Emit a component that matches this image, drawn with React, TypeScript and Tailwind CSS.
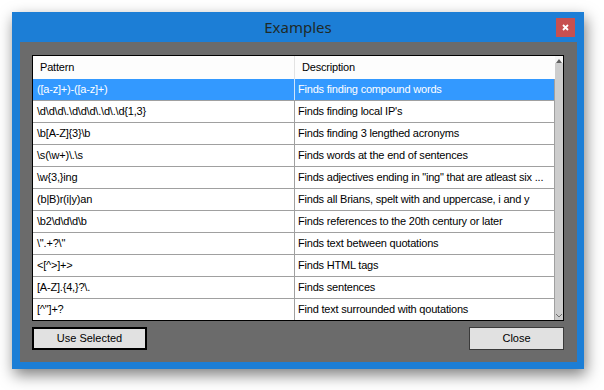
import React from "react";

const rows: [string, string][] = [
  ["([a-z]+)-([a-z]+)", "Finds finding compound words"],
  ["\\d\\d\\d\\.\\d\\d\\d\\.\\d\\.\\d{1,3}", "Finds finding local IP's"],
  ["\\b[A-Z]{3}\\b", "Finds finding 3 lengthed acronyms"],
  ["\\s(\\w+)\\.\\s", "Finds words at the end of sentences"],
  ["\\w{3,}ing", "Finds adjectives ending in \"ing\" that are atleast six ..."],
  ["(b|B)r(i|y)an", "Finds all Brians, spelt with and uppercase, i and y"],
  ["\\b2\\d\\d\\d\\b", "Finds references to the 20th century or later"],
  ["\\\".+?\\\"", "Finds text between quotations"],
  ["<[^>]+>", "Finds HTML tags"],
  ["[A-Z].{4,}?\\.", "Finds sentences"],
  ["[^\"]+?", "Find text surrounded with qoutations"],
];

export default function App() {
  return (
    <div
      className="w-[604px] h-[390px] bg-white pt-[12px] pl-[12px] overflow-hidden"
      style={{ fontFamily: '"Liberation Sans", Arial, sans-serif' }}
    >
      <div className="w-[572px] h-[357px] bg-[#1c7ed6] flex flex-col shadow-[2px_6px_14px_rgba(0,0,0,0.5)]">
        {/* title bar */}
        <div className="relative h-[30px] flex items-center justify-center">
          <span
            className="text-[15px] text-[#1f2a28] leading-none"
            style={{ fontFamily: '"Noto Sans", "Open Sans", sans-serif' }}
          >
            Examples
          </span>
          <div className="absolute right-[9px] top-[6px] w-[19px] h-[19px] bg-[#c75050] flex items-center justify-center">
            <svg width="7" height="7" viewBox="0 0 7 7">
              <path d="M1 1 L6 6 M6 1 L1 6" stroke="white" strokeWidth="1.8" />
            </svg>
          </div>
        </div>
        {/* content */}
        <div className="ml-[8px] mr-[7px] h-[320px] bg-[#6b6b6b] pl-[12px] pr-[13px] pt-[13px] flex flex-col">
          <div className="w-[532px] h-[266px] border border-black bg-white flex text-[11px] tracking-[-0.2px] text-black">
            {/* columns area */}
            <div className="flex flex-col w-[522px]">
              <div className="flex h-[23px] bg-[#fdfdfd] items-center">
                <div className="w-[262px] h-full border-r border-[#e3e3e3] pl-[7px] flex items-center">
                  Pattern
                </div>
                <div className="w-[260px] h-full pl-[7px] flex items-center">Description</div>
              </div>
              {rows.map(([p, d], i) => {
                const sel = i === 0;
                const last = i === rows.length - 1;
                return (
                  <div
                    key={i}
                    className={
                      "flex " +
                      (last ? "h-[21px] " : "h-[22px] border-b border-[#a0a0a0] ") +
                      (sel ? "bg-[#3399ff] text-white" : "bg-white")
                    }
                  >
                    <div
                      className={
                        "w-[262px] border-r pl-[4px] flex items-center whitespace-nowrap overflow-hidden " +
                        (sel ? "border-[#cfe5fb]" : "border-[#a0a0a0]")
                      }
                    >
                      {p}
                    </div>
                    <div className="w-[260px] border-r border-[#a0a0a0] pl-[3px] flex items-center whitespace-nowrap overflow-hidden">
                      {d}
                    </div>
                  </div>
                );
              })}
            </div>
            {/* scrollbar */}
            <div className="w-[8px] flex flex-col bg-[#cdcdcd]">
              <div className="h-[7px] bg-[#f5f5f5] flex items-end justify-center">
                <svg width="6" height="4" viewBox="0 0 6 4">
                  <path d="M0 4 L3 0 L6 4 Z" fill="#606060" />
                </svg>
              </div>
              <div className="flex-1" />
              <div className="h-[6px] flex items-start justify-center">
                <svg width="6" height="4" viewBox="0 0 6 4">
                  <path d="M0 0 L3 3 L6 0" stroke="#707070" strokeWidth="1" fill="none" />
                </svg>
              </div>
            </div>
          </div>
          <div className="flex justify-between mt-[6px]">
            <button className="w-[115px] h-[23px] border-2 border-black bg-[#e1e1e1] text-[11px] text-black flex items-center justify-center">
              Use Selected
            </button>
            <button className="w-[95px] h-[23px] border border-[#3a3a3a] bg-[#e1e1e1] text-[11px] text-black flex items-center justify-center">
              Close
            </button>
          </div>
        </div>
      </div>
    </div>
  );
}
